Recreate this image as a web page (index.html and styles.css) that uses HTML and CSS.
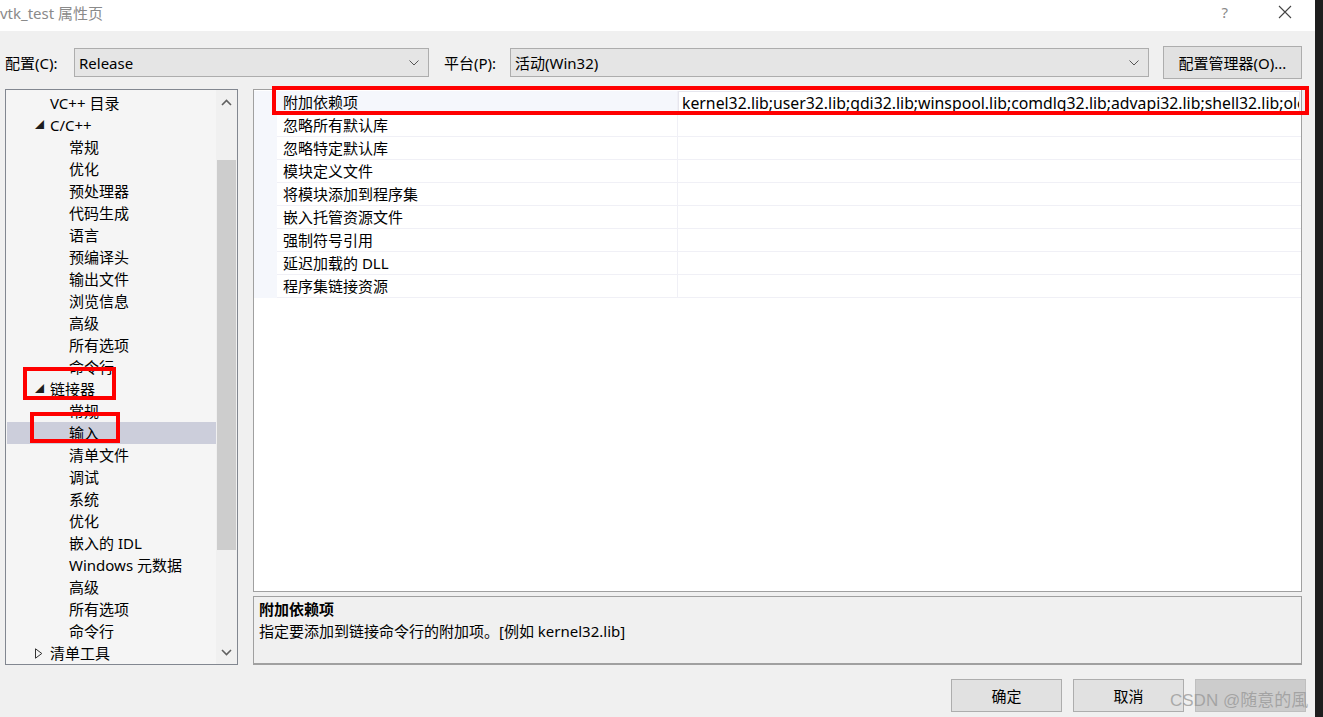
FILE: index.html
```html
<!DOCTYPE html>
<html lang="zh-CN">
<head>
<meta charset="utf-8">
<title>vtk_test 属性页</title>
<link rel="stylesheet" href="styles.css">
</head>
<body>
<div class="screen">
  <div class="dialog">
    <div class="titlebar">
      <span class="title">vtk_test 属性页</span>
      <div class="title-actions">
        <span class="help">?</span>
        <svg class="close" width="14" height="14" viewBox="0 0 14 14"><path d="M1 1L13 13M13 1L1 13" stroke="#444" stroke-width="1.1" fill="none"/></svg>
      </div>
    </div>

    <div class="config-row">
      <label class="lbl">配置(C):</label>
      <div class="combo combo-config">
        <span>Release</span>
        <svg class="chev" width="10" height="6" viewBox="0 0 10 6"><path d="M0.5 0.5L5 5L9.5 0.5" stroke="#555" stroke-width="1" fill="none"/></svg>
      </div>
      <label class="lbl lbl-platform">平台(P):</label>
      <div class="combo combo-platform">
        <span>活动(Win32)</span>
        <svg class="chev" width="10" height="6" viewBox="0 0 10 6"><path d="M0.5 0.5L5 5L9.5 0.5" stroke="#555" stroke-width="1" fill="none"/></svg>
      </div>
      <button class="btn btn-manager">配置管理器(O)...</button>
    </div>

    <div class="main">
      <div class="tree">
        <div class="tree-items">
          <div class="ti l1">VC++ 目录</div>
          <div class="ti l1"><span class="exp">&#9698;</span>C/C++</div>
          <div class="ti l2">常规</div>
          <div class="ti l2">优化</div>
          <div class="ti l2">预处理器</div>
          <div class="ti l2">代码生成</div>
          <div class="ti l2">语言</div>
          <div class="ti l2">预编译头</div>
          <div class="ti l2">输出文件</div>
          <div class="ti l2">浏览信息</div>
          <div class="ti l2">高级</div>
          <div class="ti l2">所有选项</div>
          <div class="ti l2">命令行</div>
          <div class="ti l1"><span class="exp">&#9698;</span>链接器</div>
          <div class="ti l2">常规</div>
          <div class="ti l2 sel">输入</div>
          <div class="ti l2">清单文件</div>
          <div class="ti l2">调试</div>
          <div class="ti l2">系统</div>
          <div class="ti l2">优化</div>
          <div class="ti l2">嵌入的 IDL</div>
          <div class="ti l2">Windows 元数据</div>
          <div class="ti l2">高级</div>
          <div class="ti l2">所有选项</div>
          <div class="ti l2">命令行</div>
          <div class="ti l1"><svg class="col" width="8" height="11" viewBox="0 0 8 11"><path d="M0.5 0.8L6.8 5.5L0.5 10.2Z" stroke="#333" stroke-width="1" fill="none"/></svg>清单工具</div>
        </div>
        <div class="vscroll">
          <svg class="sarrow" width="11" height="7" viewBox="0 0 11 7"><path d="M1 6L5.5 1.5L10 6" stroke="#606060" stroke-width="1.6" fill="none"/></svg>
          <div class="track"><div class="thumb"></div></div>
          <svg class="sarrow" width="11" height="7" viewBox="0 0 11 7"><path d="M1 1L5.5 5.5L10 1" stroke="#606060" stroke-width="1.6" fill="none"/></svg>
        </div>
      </div>

      <div class="right">
        <div class="grid">
          <div class="rows">
            <div class="row sel"><div class="name">附加依赖项</div><div class="val edit">kernel32.lib;user32.lib;gdi32.lib;winspool.lib;comdlg32.lib;advapi32.lib;shell32.lib;ole32.lib;oleaut32.lib;uuid.lib;odbc32.lib;odbccp32.lib</div></div>
            <div class="row"><div class="name">忽略所有默认库</div><div class="val"></div></div>
            <div class="row"><div class="name">忽略特定默认库</div><div class="val"></div></div>
            <div class="row"><div class="name">模块定义文件</div><div class="val"></div></div>
            <div class="row"><div class="name">将模块添加到程序集</div><div class="val"></div></div>
            <div class="row"><div class="name">嵌入托管资源文件</div><div class="val"></div></div>
            <div class="row"><div class="name">强制符号引用</div><div class="val"></div></div>
            <div class="row"><div class="name">延迟加载的 DLL</div><div class="val"></div></div>
            <div class="row"><div class="name">程序集链接资源</div><div class="val"></div></div>
          </div>
        </div>
        <div class="desc">
          <div class="desc-title">附加依赖项</div>
          <div class="desc-text">指定要添加到链接命令行的附加项。[例如 kernel32.lib]</div>
        </div>
      </div>
    </div>

    <div class="footer">
      <button class="btn btn-foot">确定</button>
      <button class="btn btn-foot">取消</button>
      <button class="btn btn-foot btn-disabled" aria-label="应用"></button>
    </div>

    <div class="mark mark-linker"></div>
    <div class="mark mark-input"></div>
    <div class="mark mark-row"></div>
    <div class="watermark">CSDN @随意的風</div>
  </div>
  <div class="dark-edge"></div>
</div>
</body>
</html>
```

FILE: styles.css
```css
* { box-sizing: border-box; }
html, body { margin: 0; padding: 0; }
body {
  font-family: "Noto Sans", "Noto Sans CJK SC", sans-serif;
  font-size: 15px;
  color: #000;
  background: #f0f0f0;
}
.screen {
  display: flex;
  width: 1323px;
  height: 717px;
  overflow: hidden;
}
.dialog {
  position: relative;
  width: 1315px;
  height: 717px;
  background: #f0f0f0;
  display: flex;
  flex-direction: column;
}
.dark-edge {
  width: 8px;
  height: 717px;
  background: #1e1e1e;
}
.titlebar {
  height: 31px;
  background: #fff;
  display: flex;
  align-items: center;
  justify-content: space-between;
  padding: 0 23px 0 0;
}
.title {
  color: #8a8a8a;
  font-size: 15px;
  margin-top: -7px;
}
.title-actions {
  display: flex;
  align-items: center;
  gap: 50px;
  margin-top: -7px;
}
.help {
  color: #8a8a8a;
  font-size: 15px;
}
.close { display: block; }

.config-row {
  display: flex;
  align-items: center;
  height: 33px;
  margin-top: 15px;
  padding-left: 5px;
}
.lbl { width: 69px; line-height: 20px; }
.lbl-platform { width: 66px; margin-left: 15px; }
.combo {
  height: 29px;
  background: #e5e5e5;
  border: 1px solid #adadad;
  display: flex;
  align-items: center;
  justify-content: space-between;
  padding: 0 9px 0 4px;
}
.combo-config { width: 355px; }
.combo-platform { width: 639px; }
.chev { display: block; }
.btn {
  font-family: inherit;
  font-size: 15px;
  color: #000;
  background: #e1e1e1;
  border: 1px solid #adadad;
  padding: 0;
}
.btn-manager {
  margin-left: 14px;
  width: 139px;
  height: 33px;
}

.main {
  display: flex;
  margin-top: 10px;
  padding-left: 5px;
  height: 576px;
}
.tree {
  width: 233px;
  height: 576px;
  border: 1px solid #828790;
  background: #f5f5f5;
  display: flex;
}
.tree-items {
  flex: 1;
  padding: 2px 0 0 1px;
  overflow: hidden;
}
.ti {
  height: 22px;
  line-height: 22px;
  white-space: nowrap;
  position: relative;
}
.ti.l1 { padding-left: 43px; }
.ti.l2 { padding-left: 62px; }
.ti.sel { background: #cccedb; }
.exp {
  position: absolute;
  left: 28px;
  top: 0;
  font-size: 9px;
  color: #1e1e1e;
}
.col {
  position: absolute;
  left: 28px;
  top: 6px;
}
.vscroll {
  width: 21px;
  background: #f0f0f0;
  display: flex;
  flex-direction: column;
  align-items: center;
  padding: 9px 0 8px;
}
.sarrow { display: block; flex: none; }
.track {
  flex: 1;
  width: 100%;
  padding: 54px 1px 99px;
}
.thumb {
  width: 100%;
  height: 100%;
  background: #cdcdcd;
}

.right {
  margin-left: 15px;
  width: 1049px;
  display: flex;
  flex-direction: column;
  gap: 4px;
}
.grid {
  height: 504px;
  background: #fff;
  border: 1px solid #a0a0a0;
  padding-top: 1px;
}
.rows {
  background: #f5f7fc;
  padding-left: 23px;
}
.row {
  display: flex;
  height: 23px;
  line-height: 22px;
  background: #fff;
  border-bottom: 1px solid #f0f0f6;
}
.row.sel { background: #f5f7fc; }
.name {
  width: 401px;
  padding-left: 6px;
  border-right: 1px solid #f0f0f6;
  white-space: nowrap;
}
.val {
  flex: 1;
  white-space: nowrap;
  overflow: hidden;
  padding-left: 4px;
}
.val.edit {
  background: #fff;
  border: 1px solid #e6e6ee;
  margin-right: 1px;
  padding-left: 3px;
  padding-right: 2px;
  font-size: 15.8px;
}
.desc {
  height: 69px;
  border: 1px solid #a0a0a0;
  border-bottom-width: 2px;
  background: #f0f0f0;
  padding: 1px 0 0 5px;
}
.desc-title { font-weight: bold; line-height: 22px; }
.desc-text { line-height: 23px; }

.footer {
  display: flex;
  justify-content: flex-end;
  gap: 11px;
  padding-right: 9px;
  margin-top: 14px;
}
.btn-foot {
  width: 111px;
  height: 33px;
}
.btn-disabled {
  background: #cccccc;
  border-color: #bfbfbf;
}

.mark {
  position: absolute;
  border: 4px solid #ff0000;
}
.mark-linker { left: 23px; top: 367px; width: 93px; height: 33px; }
.mark-input { left: 30px; top: 412px; width: 90px; height: 31px; }
.mark-row { left: 272px; top: 86px; width: 1037px; height: 29px; }
.watermark {
  position: absolute;
  left: 1170px;
  top: 686px;
  font-family: "Liberation Sans", "Noto Sans CJK SC", sans-serif;
  font-size: 17px;
  color: rgba(150, 150, 150, 0.75);
  white-space: nowrap;
}
```
